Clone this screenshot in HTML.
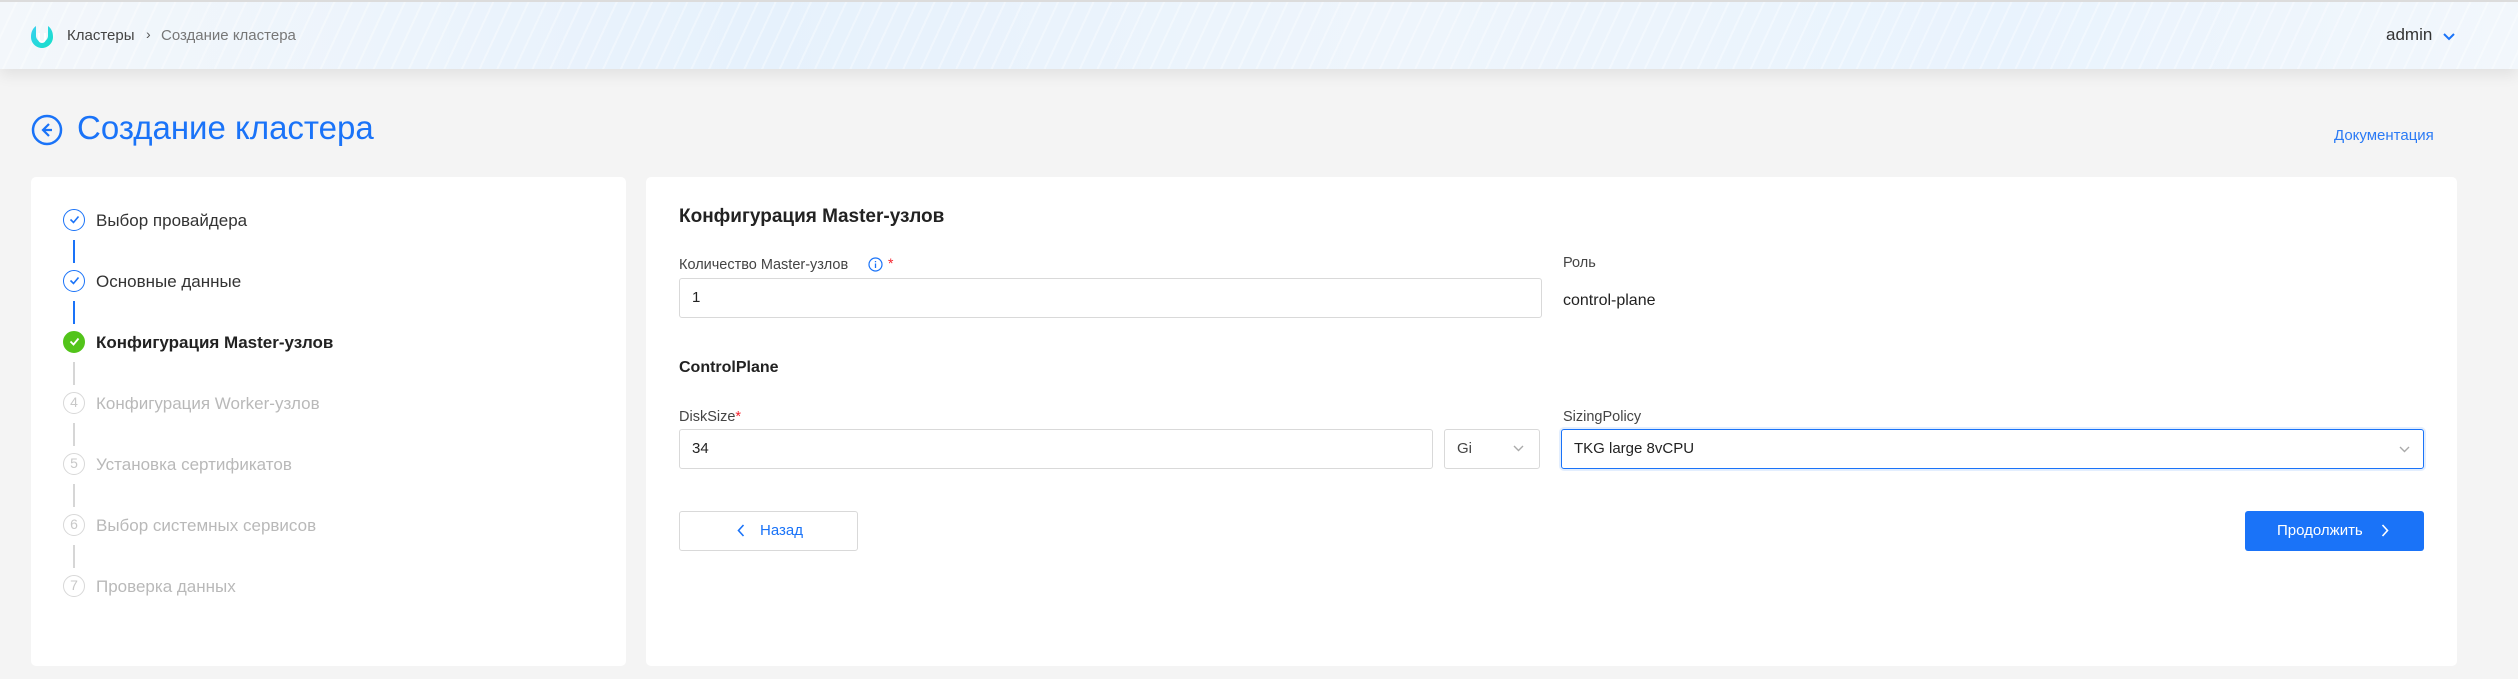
<!DOCTYPE html>
<html><head><meta charset="utf-8"><style>
*{box-sizing:border-box;margin:0;padding:0}
body{width:2518px;height:679px;background:#f4f4f4;font-family:"Liberation Sans",sans-serif;position:relative;overflow:hidden;color:#222}
.abs{position:absolute;white-space:nowrap}
#hdr{left:0;top:0;width:2518px;height:69px;border-top:2px solid #dcdcdc;background:
repeating-linear-gradient(115deg,rgba(255,255,255,0) 0 14px,rgba(255,255,255,.35) 14px 16px),
linear-gradient(90deg,#f3f7fb 0%,#e6f1fc 30%,#eef5fc 55%,#e9f3fd 80%,#f2f7fc 100%);box-shadow:0 6px 14px rgba(0,0,0,.08)}
.card{background:#fff;border-radius:5px;top:177px;height:489px}
.step{position:absolute;left:63px;width:22px;height:22px;border-radius:50%;border:1.5px solid #1a73f8;font-size:14px;text-align:center;line-height:19px;color:#c8c8c8}
.step.g{border-color:#d8d8d8}
.st{position:absolute;left:96px;font-size:17px;color:#333;line-height:20px;white-space:nowrap}
.st.g{color:#b9b9b9}
.ln{position:absolute;left:73px;width:2px;height:23px;background:#1a73f8}
.ln.g{background:#d6d6d6}
.lbl{position:absolute;font-size:14.5px;color:#444;white-space:nowrap}
.inp{position:absolute;border:1px solid #d9d9d9;border-radius:3px;height:40px;background:#fff;font-size:15px;line-height:38px;padding-left:12px;color:#222}
</style></head><body>
<div id="hdr" class="abs">
  <svg class="abs" style="left:31px;top:23px" width="22" height="24" viewBox="0 0 22 24"><defs><linearGradient id="lg" x1="0" y1="0" x2="1" y2="1"><stop offset="0" stop-color="#3ad0f0"/><stop offset="1" stop-color="#14e0c8"/></linearGradient></defs><path d="M5 1C1 4 0 8 0 12c0 6 5 11 11 11s11-5 11-11c0-4-1-8-5-11v10c0 3-3 6-6 6s-6-3-6-6z" fill="url(#lg)"/><path d="M8 8v6c0 2 1.5 3 3 3s3-1 3-3V8" stroke="#fff" stroke-width="2" fill="none"/></svg>
  <div class="abs" style="left:67px;top:25px;font-size:15px;color:#444">Кластеры</div>
  <div class="abs" style="left:146px;top:24px;font-size:14px;color:#555">›</div>
  <div class="abs" style="left:161px;top:25px;font-size:15px;color:#777">Создание кластера</div>
  <div class="abs" style="left:2386px;top:23px;font-size:17px;color:#333">admin</div>
  <svg class="abs" style="left:2443px;top:31px" width="12" height="8" viewBox="0 0 12 8"><path d="M1 1l5 5 5-5" stroke="#1a73f8" stroke-width="2" fill="none"/></svg>
</div>
<svg class="abs" style="left:31px;top:114px" width="32" height="32" viewBox="0 0 32 32"><circle cx="16" cy="16" r="14" stroke="#1a73f8" stroke-width="2.5" fill="none"/><path d="M18 10l-6 6 6 6M12 16h9" stroke="#1a73f8" stroke-width="2.2" fill="none"/></svg>
<div class="abs" style="left:77px;top:109px;font-size:33px;color:#1a73f8">Создание кластера</div>
<div class="abs" style="left:2334px;top:127px;font-size:15px;color:#2a7af5">Документация</div>

<div class="card abs" style="left:31px;width:595px"></div>
<div class="step" style="top:209px"><svg width="19" height="19" viewBox="0 0 19 19"><path d="M5.5 9.5l3 3 5-6" stroke="#1a73f8" stroke-width="1.6" fill="none"/></svg></div>
<div class="st" style="top:211px">Выбор провайдера</div>
<div class="ln" style="top:240px"></div>
<div class="step" style="top:270px"><svg width="19" height="19" viewBox="0 0 19 19"><path d="M5.5 9.5l3 3 5-6" stroke="#1a73f8" stroke-width="1.6" fill="none"/></svg></div>
<div class="st" style="top:272px">Основные данные</div>
<div class="ln" style="top:301px"></div>
<div class="step" style="top:331px;background:#52c41a;border-color:#52c41a"><svg width="19" height="19" viewBox="0 0 19 19"><path d="M5.5 9.5l3 3 5-6" stroke="#fff" stroke-width="1.8" fill="none"/></svg></div>
<div class="st" style="top:333px;font-weight:bold;color:#222">Конфигурация Master-узлов</div>
<div class="ln g" style="top:362px"></div>
<div class="step g" style="top:392px">4</div>
<div class="st g" style="top:394px">Конфигурация Worker-узлов</div>
<div class="ln g" style="top:423px"></div>
<div class="step g" style="top:453px">5</div>
<div class="st g" style="top:455px">Установка сертификатов</div>
<div class="ln g" style="top:484px"></div>
<div class="step g" style="top:514px">6</div>
<div class="st g" style="top:516px">Выбор системных сервисов</div>
<div class="ln g" style="top:545px"></div>
<div class="step g" style="top:575px">7</div>
<div class="st g" style="top:577px">Проверка данных</div>

<div class="card abs" style="left:646px;width:1811px"></div>
<div class="abs" style="left:679px;top:206px;font-size:19px;font-weight:bold;color:#222">Конфигурация Master-узлов</div>
<div class="lbl" style="left:679px;top:257px">Количество Master-узлов</div>
<svg class="abs" style="left:868px;top:257px" width="15" height="15" viewBox="0 0 15 15"><circle cx="7.5" cy="7.5" r="6.5" stroke="#1a73f8" stroke-width="1.2" fill="none"/><path d="M7.5 6.5v4.5M7.5 4v1.2" stroke="#1a73f8" stroke-width="1.3"/></svg>
<div class="abs" style="left:888px;top:255px;color:#f5222d;font-size:14px">*</div>
<div class="inp" style="left:679px;top:278px;width:863px">1</div>
<div class="lbl" style="left:1563px;top:255px">Роль</div>
<div class="abs" style="left:1563px;top:292px;font-size:16px;color:#222">control-plane</div>
<div class="abs" style="left:679px;top:359px;font-size:16px;font-weight:bold;color:#222">ControlPlane</div>
<div class="lbl" style="left:679px;top:409px">DiskSize<span style="color:#f5222d">*</span></div>
<div class="inp" style="left:679px;top:429px;width:754px">34</div>
<div class="inp" style="left:1444px;top:429px;width:96px;color:#444">Gi</div>
<svg class="abs" style="left:1513px;top:445px" width="11" height="7" viewBox="0 0 11 7"><path d="M1 1l4.5 4.5L10 1" stroke="#aaa" stroke-width="1.4" fill="none"/></svg>
<div class="lbl" style="left:1563px;top:409px">SizingPolicy</div>
<div class="inp" style="left:1561px;top:429px;width:863px;border:1.5px solid #1a73f8;box-shadow:0 0 0 2px rgba(26,115,248,.12)">TKG large 8vCPU</div>
<svg class="abs" style="left:2399px;top:446px" width="11" height="7" viewBox="0 0 11 7"><path d="M1 1l4.5 4.5L10 1" stroke="#aaa" stroke-width="1.4" fill="none"/></svg>
<div class="abs" style="left:679px;top:511px;width:179px;height:40px;border:1px solid #d9d9d9;border-radius:3px;background:#fff"></div>
<svg class="abs" style="left:737px;top:524px" width="8" height="13" viewBox="0 0 8 13"><path d="M6.5 1L1.5 6.5 6.5 12" stroke="#1a73f8" stroke-width="1.6" fill="none"/></svg>
<div class="abs" style="left:760px;top:522px;font-size:15px;color:#1a73f8">Назад</div>
<div class="abs" style="left:2245px;top:511px;width:179px;height:40px;border-radius:3px;background:#1a73f8"></div>
<div class="abs" style="left:2277px;top:522px;font-size:15px;color:#fff">Продолжить</div>
<svg class="abs" style="left:2381px;top:524px" width="8" height="13" viewBox="0 0 8 13"><path d="M1.5 1l5 5.5-5 5.5" stroke="#fff" stroke-width="1.6" fill="none"/></svg>
</body></html>
